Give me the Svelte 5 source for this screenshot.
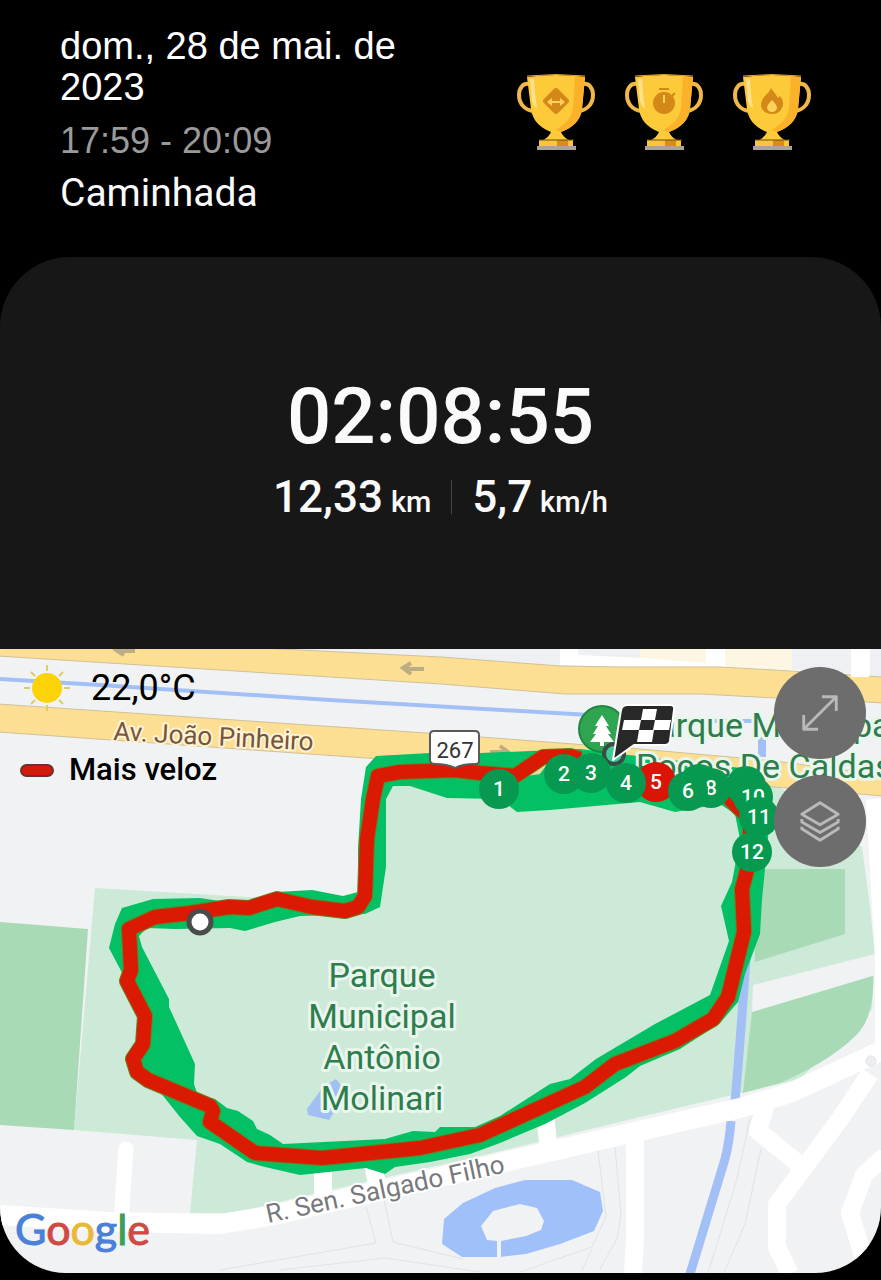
<script>
  const trophies = ['Distância', 'Duração', 'Calorias'];

  // Marks buried under their neighbours carry no label.
  const kmMarkers = [
    { n: '', x: 746, y: 787 },
    { n: '10', x: 753, y: 798 },
    { n: '11', x: 759, y: 818 },
    { n: '12', x: 752, y: 853 },
    { n: '', x: 699, y: 785 },
    { n: '8', x: 711, y: 789 },
    { n: '5', x: 656, y: 783, fast: true },
    { n: '6', x: 688, y: 792 },
    { n: '3', x: 591, y: 774 },
    { n: '4', x: 626, y: 784 },
    { n: '2', x: 564, y: 775 },
    { n: '1', x: 499, y: 790 }
  ];

  const parkLines = ['Parque', 'Municipal', 'Antônio', 'Molinari'];

  const brand = [
    ['G', '#4a80d8'],
    ['o', '#cf4a45'],
    ['o', '#e8b935'],
    ['g', '#4a80d8'],
    ['l', '#3f9d58'],
    ['e', '#cf4a45']
  ];

  const track =
    'M580 760L570 757L543 758L515 777L480 774L455 771L400 773L378 777L373 800L367 840L365 897L358 908L345 912L312 908L277 900L249 909L229 908L190 914L155 918L129 930L131 971L127 982L145 1017L143 1045L133 1060L137 1073L148 1081L210 1107L213 1112L210 1123L255 1154L322 1159L420 1149L480 1136L585 1088L615 1065L675 1042L713 1020L728 998L744 933L742 890L750 860V820L728 798';
</script>

<main>
  <header>
    <div class="when">
      <h1>dom., 28 de mai. de 2023</h1>
      <p class="hours">17:59 - 20:09</p>
      <p class="kind">Caminhada</p>
    </div>
    <div class="trophies">
      {#each trophies as name, i}
        <svg viewBox="0 0 78 78" role="img" aria-label={name}>
          <g fill="none" stroke="#f0b848" stroke-width="4">
            <path d="M12 10C6 9 2 14 2 21C2 30 8 36 16 37" />
            <path d="M66 10C72 9 76 14 76 21C76 30 70 36 62 37" />
          </g>
          <path fill="#fdca3a" d="M10 3Q39-1 68 3L65 35Q63 51 44 58Q46 63 52 66H26Q32 63 34 58Q16 51 14 35Z" />
          <path fill="#fcb12b" d="M58 2L68 3L65 35Q63 51 44 58L38 56Q54 48 56 34Z" />
          <path fill="#ffe08a" d="M13 5L17 5Q18 22 20 34Q17 34 15 27Z" />
          <path d="M10 2Q39-1 68 2" fill="none" stroke="#e5a32f" stroke-width="1" />
          <path fill="#fbc43d" d="M22 66H56V72H22Z" />
          <path fill="#d78d16" d="M40 66H51V72H40Z" />
          <path stroke="#6b4a1b" stroke-width="1" d="M22 66H57" />
          <path fill="#a8a596" d="M20 72H59V76H20Z" />
          {#if i === 0}
            <rect x="-10" y="-10" width="20" height="20" rx="3" fill="#d48818" transform="translate(39 27) rotate(45)" />
            <path fill="#fdd25a" d="M30 28L35 24V27H43V24L48 28L43 32V29H35V32Z" />
          {:else if i === 1}
            <circle cx="39" cy="29" r="11" fill="#d48818" />
            <path stroke="#d48818" stroke-width="2" d="M34 15H44M46 23L50 19" />
            <path stroke="#fdd25a" stroke-width="2" d="M39 21V29" />
          {:else}
            <path fill="#d48818" d="M38 14Q42 19 45 24L47 22Q52 28 49 34Q46 40 39 40Q28 39 28 30Q29 24 34 20Q37 17 38 14Z" />
            <path fill="#fdd25a" d="M39 26Q44 31 44 34Q43 38 39 38Q35 38 34 34Q34 31 39 26Z" />
          {/if}
        </svg>
      {/each}
    </div>
  </header>

  <section class="card">
    <div class="summary">
      <strong class="duration">02:08:55</strong>
      <div class="stats">
        <span class="stat">12,33 <small>km</small></span>
        <span class="rule"></span>
        <span class="stat">5,7 <small>km/h</small></span>
      </div>
    </div>

    <div class="map">
      <svg class="canvas" viewBox="0 650 881 624" role="img" aria-label="Percurso da caminhada">
        <rect y="650" width="881" height="624" fill="#f1f2f4" />

        <!-- parks -->
        <path fill="#cde9d7" d="M95 889L366 905L374 762L560 770L780 788L862 848L869 900L875 955L872 1010L800 1080L640 1118L480 1157L300 1198L235 1214L190 1214L197 1141L74 1131Z" />
        <path fill="#a7dab5" d="M0 923L88 930L74 1131L0 1126ZM753 870H845V935L755 963Z" />
        <path fill="#f1f2f4" d="M753 986L875 955V976L752 1014Z" />
        <path fill="#a7dab5" d="M752 1013L873 977Q874 1015 860 1032Q835 1060 780 1084L743 1094Z" />

        <!-- buildings along the top -->
        <path fill="#fff" d="M560 650H881V679L720 669L620 668L560 666Z" />
        <path fill="#eff0f4" d="M300 650H560V667L441 658ZM578 650H640V659L578 656ZM792 650H851V675L792 671ZM870 650H881V678L870 677Z" />
        <path fill="#fdf6e2" d="M640 650H706V664L640 659ZM725 650H792V671L725 668Z" />

        <!-- avenues -->
        <path fill="#fddf93" stroke="#cfc19a" d="M-2 638L120 642L300 651L441 658L560 667L620 668H720L775 671L883 678V704L850 702L775 699L700 695H565L441 685L-2 657Z" />
        <path fill="#fddf93" stroke="#cfc19a" d="M-2 705L441 735L640 750L775 762L883 776V797L775 788L500 766L366 759L-2 733Z" />
        <g fill="none" stroke="#a2c0f6">
          <path stroke-width="4" d="M0 680L100 686L330 701L590 716" />
          <path stroke-width="4" d="M712 722H755" />
          <path stroke-width="8" d="M762 738V758" />
          <path stroke-width="9" d="M746 960Q739 1060 735 1102M731 1122Q729 1145 725 1160L690 1275" />
        </g>
        <g fill="none" stroke="#bdad85" stroke-width="4">
          <path d="M424 670H406M411 664L403 669L411 675M135 652H119M124 646L116 651L124 656" />
          <path d="M490 753H506M500 747L508 753L500 758" />
        </g>

        <!-- side streets -->
        <g fill="none" stroke="#e0e2e5" stroke-width="1">
          <path d="M220 1271L376 1244L366 1208M384 1200L393 1243L463 1260M280 1271L385 1259L480 1273M598 1151L606 1218L592 1248L520 1273M615 1148L621 1216L617 1240L600 1270M592 1250L582 1271" />
          <path d="M750 1119L737 1180L708 1274M761 1150L745 1225L724 1274" />
        </g>
        <g fill="none" stroke="#fff">
          <path stroke-width="20" stroke-linejoin="round" d="M0 1216L110 1223L220 1225L270 1217L440 1178L600 1141L740 1109L790 1094L881 1052" />
          <path stroke-width="15" stroke-linecap="round" d="M126 1150L121 1222" />
          <path stroke-width="18" d="M323 1170V1208M372 1160L379 1195M545 1115L549 1152M635 1135V1240L633 1275" />
          <path stroke-width="18" stroke-linejoin="round" d="M766 1105L758 1132L800 1166M870 1075L840 1120L777 1205V1248L790 1275M885 1157L864 1176L850 1214L864 1260" />
          <path stroke-width="18" d="M860 650V678" />
          <path stroke-width="18" d="M875 800L884 960V1060" />
        </g>
        <circle cx="871" cy="1062" r="5" fill="#eceef0" stroke="#dfe1e4" />

        <!-- water -->
        <path fill="#a0c0fa" fill-rule="evenodd" d="M444 1220L463 1204L495 1189L525 1181H572L600 1193L603 1212L594 1232L560 1245L526 1255L500 1258H462L442 1245ZM481 1227L493 1212L520 1205L537 1209L544 1222L541 1231L526 1237L501 1242V1258H497V1242L487 1241Z" />
        <path fill="#a2bff4" d="M323 1088L336 1080L344 1090L334 1113L329 1121L308 1116L307 1110Z" />

        <!-- recorded track -->
        <path fill="#02c063" fill-rule="evenodd" d="M366 768L376 757L430 754H480L530 752L580 750L620 755L750 770L770 800L768 840L762 900L760 935L745 975L738 1003L720 1024L680 1050L640 1067L626 1078L585 1104L545 1125L500 1144L470 1155L430 1163L395 1168L385 1175L366 1169L300 1176L265 1168L247 1163L220 1145L197 1137L180 1118L160 1093L140 1075L128 985L109 949L115 925L122 909L153 900L200 899L240 905L277 893L312 891L343 897L358 893V850L361 800ZM393 787L386 800V868L380 908L365 915L300 917L275 923L245 932L230 929L175 930L147 929L139 937L142 948L169 1000V1008L195 1065L194 1085L198 1097L215 1100L227 1109L238 1112L253 1122L257 1130L270 1136L283 1145L385 1140L413 1132L435 1133L440 1128H475L500 1117L550 1085L570 1080L596 1060L655 1025L710 996L729 942L721 907L732 883L740 840L735 815L720 805L675 813L640 803L550 811L517 813L500 800L447 799L410 787Z" />
        <path fill="#cde9d7" d="M134 985L152 1018L150 1047L140 1060L122 1050L118 1000Z" />
        <path fill="#e8d99b" d="M527 777L548 764L540 775Z" />
        <path fill="none" stroke="#6f7d1d" stroke-width="16" stroke-linejoin="round" d={track} />
        <path fill="none" stroke="#da1a02" stroke-width="14" stroke-linejoin="round" d={track} />

        <!-- place names -->
        <g class="halo" font-size="34" fill="#2f7d4c">
          <text x="636" y="738">Parque Municipal</text>
          <text x="636" y="779">Poços De Caldas</text>
          {#each parkLines as line, i}
            <text x="382" y={988 + i * 41} text-anchor="middle">{line}</text>
          {/each}
        </g>
        <text class="halo avenue" font-size="26" fill="#76553b" transform="translate(113 741) rotate(3)">Av. João Pinheiro</text>
        <text class="halo" font-size="26" fill="#77797d" transform="translate(268 1224) rotate(-12)">R. Sen. Salgado Filho</text>

        <path fill="#fff" stroke="#5a5a5a" stroke-width="2" d="M434 732H475Q479 732 479 736V762Q479 765 475 765Q462 765 455 769Q447 765 435 765Q430 765 430 761V736Q430 732 434 732Z" />
        <text x="455" y="759" font-size="22" fill="#333" text-anchor="middle">267</text>

        <!-- park pin, start point and kilometre marks -->
        <circle cx="602" cy="730" r="23" fill="#2fa552" stroke="#1f8743" stroke-width="2" />
        <path fill="#fff" d="M602 716L609 727H606L611 735H608L614 743H604V747H600V743H590L596 735H593L598 727H595Z" />
        <circle cx="614" cy="755" r="10" fill="#3ccb94" stroke="#3c4a45" stroke-width="4" />
        {#each kmMarkers as m}
          <circle cx={m.x} cy={m.y} r="20" fill={m.fast ? '#da1506' : '#07994f'} />
          {#if m.n}<text class="km" x={m.x} y={m.y + 7}>{m.n}</text>{/if}
        {/each}
        <path fill="#282828" stroke="#fff" stroke-width="2" stroke-linejoin="round" d="M628 706H670Q675 706 674 711L670 742Q669 746 665 746H634L613 761L621 711Q622 706 628 706Z" />
        <path fill="#fff" fill-rule="evenodd" d="M643 710H657L655 721H671L669 731H654L652 743H637L639 731H622L624 721H641ZM641 721L639 731H653L655 721Z" />
        <circle cx="200" cy="923" r="11" fill="#fff" stroke="#4b4b4b" stroke-width="5" />

        <text class="brand" x="15" y="1246">{#each brand as [letter, tint]}<tspan fill={tint} stroke={tint}>{letter}</tspan>{/each}</text>
      </svg>

      <div class="legend">
        <div class="weather">
          <svg viewBox="0 0 48 48" aria-hidden="true">
            <g stroke="#d9cf63" stroke-width="2">
              <path d="M24 1V7M24 41V47M1 24H7M41 24H47M8 8L12 12M36 36L40 40M40 8L36 12M12 36L8 40" />
            </g>
            <circle cx="24" cy="24" r="15" fill="#fbd306" />
          </svg>
          <span>22,0°C</span>
        </div>
        <div class="fastest"><i></i><span>Mais veloz</span></div>
      </div>

      <div class="tools">
        <button aria-label="Expandir mapa">
          <svg viewBox="0 0 48 48" aria-hidden="true"><path d="M7 41L41 7M26 7H41V22M7 26V41H22" /></svg>
        </button>
        <button aria-label="Camadas do mapa">
          <svg viewBox="0 0 48 48" aria-hidden="true"><path d="M24 5L43 17L24 28L5 17ZM5 22V25L24 36L43 25V22M5 30V32L24 44L43 32V30" /></svg>
        </button>
      </div>
    </div>
  </section>
</main>

<style>
  :global(body) {
    margin: 0;
    background: #000;
  }

  main {
    font-family: Roboto, sans-serif;
    background: #000;
    color: #fafafa;
    padding-bottom: 6px;
  }

  header {
    display: flex;
    justify-content: space-between;
    align-items: flex-start;
    min-height: 231px;
    padding: 26px 70px 0 60px;
  }

  .when {
    width: 344px;
  }

  h1,
  p {
    margin: 0;
    font-weight: 400;
  }

  h1 {
    font: 38px/41px "Liberation Sans", Arial, sans-serif;
    color: #fff;
  }

  .hours {
    margin-top: 12px;
    font: 36px/42px "Liberation Sans", Arial, sans-serif;
    color: #9a9a9a;
  }

  .kind {
    margin-top: 8px;
    font-size: 39px;
    line-height: 46px;
  }

  .trophies {
    display: flex;
    gap: 30px;
    padding-top: 48px;
  }

  .trophies svg {
    width: 78px;
    height: 78px;
  }

  .card {
    overflow: hidden;
    background: #171717;
    border-radius: 70px 70px 66px 66px;
  }

  .summary {
    display: flex;
    flex-direction: column;
    align-items: center;
    padding: 114px 0 120px;
  }

  .duration {
    font-size: 78px;
    font-weight: 500;
    line-height: 92px;
  }

  .stats {
    display: flex;
    align-items: center;
    gap: 20px;
    margin-top: 8px;
    line-height: 53px;
  }

  .stat {
    font-size: 44px;
    font-weight: 500;
  }

  .stat small {
    margin-left: -3px;
    font-size: 29px;
  }

  .rule {
    width: 1px;
    height: 34px;
    margin-bottom: 6px;
    background: #454545;
  }

  .map {
    position: relative;
    color: #000;
  }

  .canvas {
    display: block;
    width: 100%;
    height: auto;
  }

  .halo {
    paint-order: stroke;
    stroke: #e9f6ee;
    stroke-width: 6px;
    stroke-linejoin: round;
  }

  text.halo {
    stroke: #fff;
    stroke-width: 4px;
  }

  text.avenue {
    stroke: #fff3d6;
  }

  .km {
    font-size: 21px;
    font-weight: 500;
    fill: #fff;
    text-anchor: middle;
  }

  .brand {
    font-family: Lato, sans-serif;
    font-size: 43px;
    stroke-width: 1px;
  }

  .legend {
    position: absolute;
    top: 15px;
    left: 20px;
    display: flex;
    flex-direction: column;
    gap: 40px;
  }

  .weather,
  .fastest {
    display: flex;
    align-items: center;
  }

  .weather {
    gap: 20px;
    padding-left: 3px;
    font-size: 36px;
    line-height: 48px;
  }

  .weather svg {
    width: 48px;
    height: 48px;
  }

  .fastest {
    gap: 15px;
    font-size: 31px;
    font-weight: 500;
    line-height: 36px;
  }

  .fastest i {
    box-sizing: border-box;
    width: 34px;
    height: 13px;
    background: #d41b0b;
    border: 2px solid #6e3028;
    border-radius: 7px;
  }

  .tools {
    position: absolute;
    top: 18px;
    right: 15px;
    display: flex;
    flex-direction: column;
    gap: 16px;
  }

  button {
    display: grid;
    place-items: center;
    width: 92px;
    height: 92px;
    padding: 0;
    border: 0;
    border-radius: 50%;
    background: #6d6d6d;
  }

  button svg {
    width: 46px;
    height: 46px;
    fill: none;
    stroke: #b9b9b9;
    stroke-width: 3px;
    stroke-linejoin: round;
  }
</style>
